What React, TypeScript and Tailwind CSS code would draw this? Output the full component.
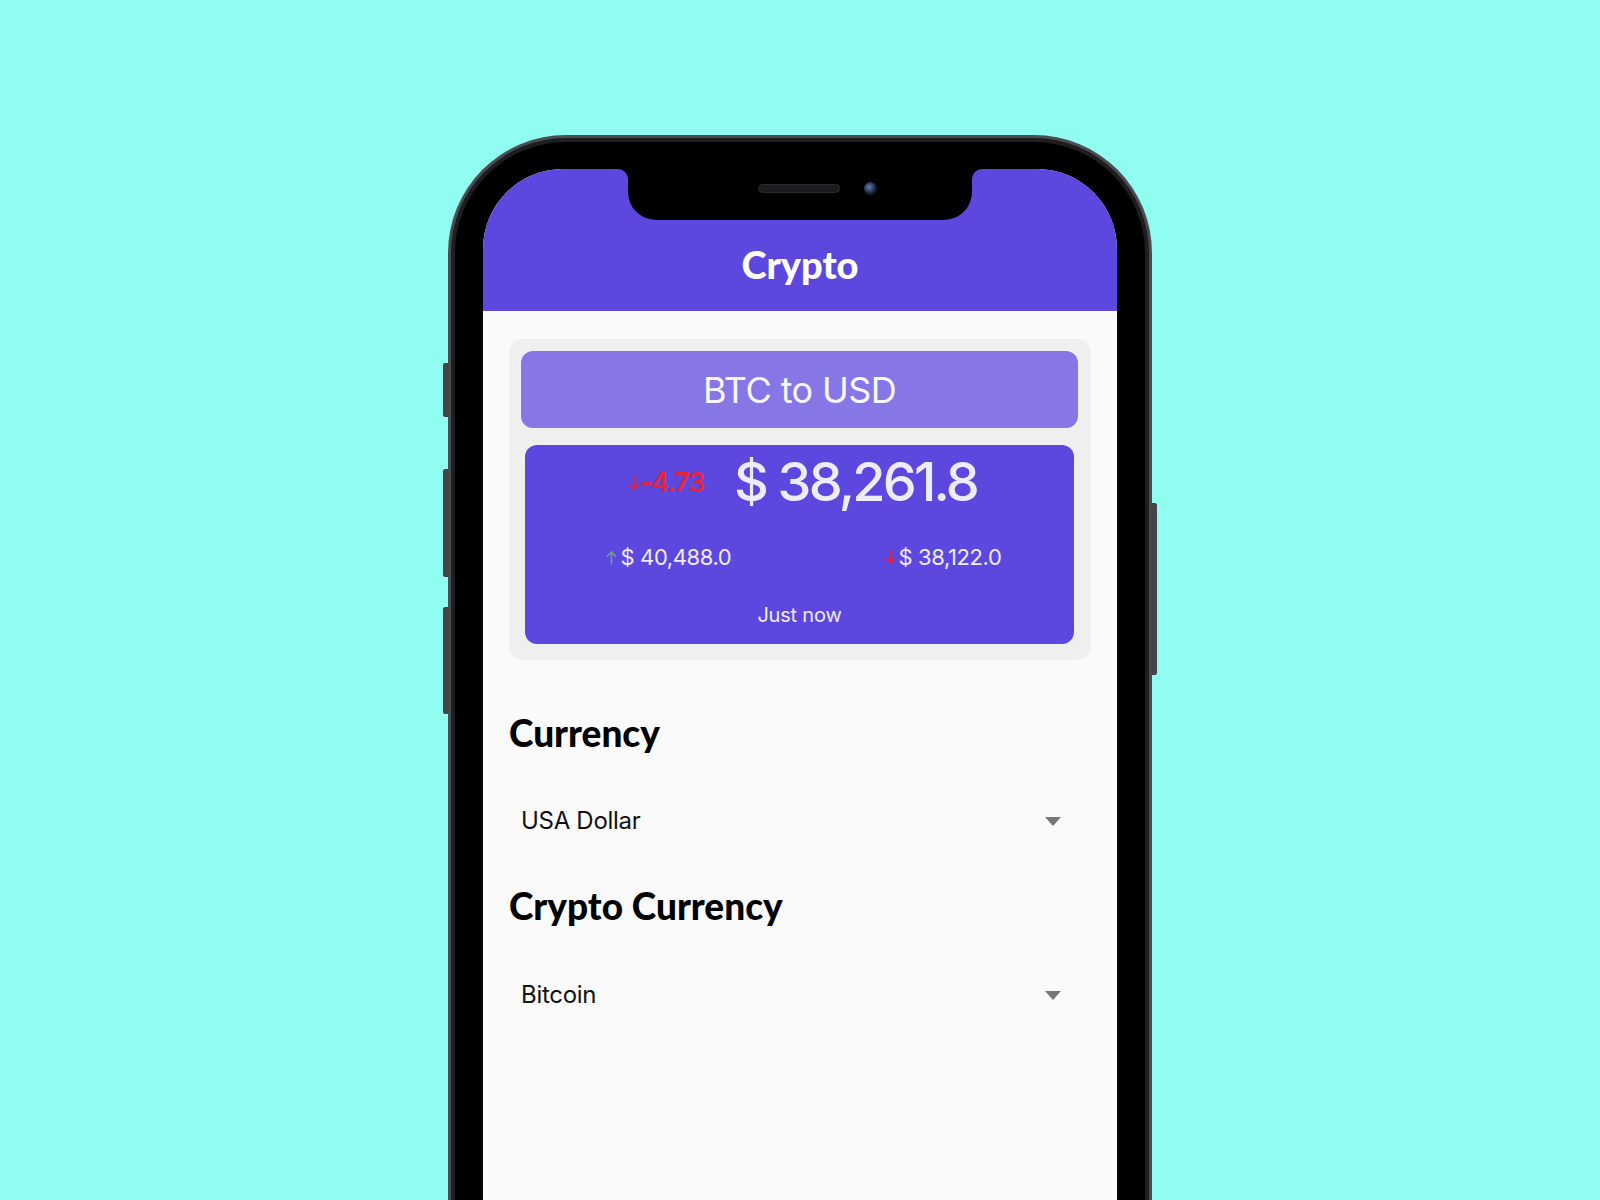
import React from "react";

const purple = "bg-[#5d48df]";

function ArrowUp({ className }: { className?: string }) {
  return (
    <svg viewBox="0 0 12 16" className={className} fill="none" stroke="currentColor" strokeWidth="1.6" strokeLinecap="round" strokeLinejoin="round">
      <path d="M6 15V2" />
      <path d="M1.5 6.5L6 2l4.5 4.5" />
    </svg>
  );
}

function ArrowDown({ className }: { className?: string }) {
  return (
    <svg viewBox="0 0 12 16" className={className} fill="none" stroke="currentColor" strokeWidth="1.8" strokeLinecap="round" strokeLinejoin="round">
      <path d="M6 1v13" />
      <path d="M1.5 9.5L6 14l4.5-4.5" />
    </svg>
  );
}

function Caret() {
  return (
    <svg viewBox="0 0 16 9" className="w-[16px] h-[9px] text-[#777]" fill="currentColor">
      <path d="M0 0h16L8 9z" />
    </svg>
  );
}

function SelectRow({ label }: { label: string }) {
  return (
    <div className="flex items-center justify-between h-[60px] pl-[12px] pr-[30px]">
      <span className="text-[24px] text-[#111] tracking-[-0.3px]">{label}</span>
      <Caret />
    </div>
  );
}

function Notch() {
  return (
    <div className="absolute top-0 left-1/2 -translate-x-1/2 w-[344px] h-[51px] bg-black rounded-b-[28px]">
      {/* little flares where the notch meets the bezel */}
      <div className="absolute -left-[10px] top-0 w-[10px] h-[10px] bg-black">
        <div className={`w-full h-full ${purple} rounded-tr-[10px]`} />
      </div>
      <div className="absolute -right-[10px] top-0 w-[10px] h-[10px] bg-black">
        <div className={`w-full h-full ${purple} rounded-tl-[10px]`} />
      </div>
      <div className="absolute left-[130px] top-[15px] w-[82px] h-[9px] rounded-full bg-[#1b1b1d] border border-[#2c2c2e]" />
      <div className="absolute left-[236px] top-[13px] w-[13px] h-[13px] rounded-full bg-[radial-gradient(circle_at_40%_40%,#5a7fb5,#142033_60%,#0b0b10)]" />
    </div>
  );
}

const lato = { fontFamily: "Lato, 'Noto Sans', sans-serif" };

export default function App() {
  return (
    <div
      className="w-full h-[1200px] overflow-hidden bg-[#90fdf0] flex justify-center pt-[135px]"
      style={{ fontFamily: "Inter, 'Noto Sans', sans-serif" }}
    >
      <div className="relative w-[704px] h-[1100px] shrink-0">
        {/* side buttons */}
        <div className="absolute -left-[5px] top-[228px] w-[6px] h-[54px] rounded-l-[2px] bg-[#444349]" />
        <div className="absolute -left-[5px] top-[334px] w-[6px] h-[108px] rounded-l-[2px] bg-[#444349]" />
        <div className="absolute -left-[5px] top-[472px] w-[6px] h-[107px] rounded-l-[2px] bg-[#444349]" />
        <div className="absolute -right-[5px] top-[368px] w-[6px] h-[172px] rounded-r-[2px] bg-[#444349]" />

        <div className="w-full h-full rounded-t-[118px] bg-[#4c4b51] p-[3px]">
          <div className="w-full h-full rounded-t-[115px] bg-[#1e1e21] p-[4px]">
            <div className="w-full h-full rounded-t-[111px] bg-black pt-[27px] px-[28px]">
              <div className="relative w-full h-full rounded-t-[80px] overflow-hidden bg-[#fafafa] flex flex-col">
                <Notch />

                {/* header */}
                <div className={`${purple} h-[142px] flex items-end justify-center pb-[27px]`}>
                  <h1 className="text-white text-[38px] leading-[40px] font-black" style={lato}>
                    Crypto
                  </h1>
                </div>

                <div className="px-[26px] pt-[28px]">
                  {/* rate card */}
                  <div className="bg-[#efefef] rounded-[14px] pt-[12px] pb-[16px] pl-[12px] pr-[13px]">
                    <div className="h-[77px] rounded-[12px] bg-[#8676e6] flex items-center justify-center">
                      <span className="text-[#f7f6ff] text-[36px] font-normal tracking-[-0.6px]">BTC to USD</span>
                    </div>
                    <div className={`mt-[17px] mx-[4px] h-[199px] rounded-[12px] ${purple} flex flex-col items-center text-[#eeecfb]`}>
                      <div className="h-[74px] flex items-center gap-[30px] pl-[6px]">
                        <div className="flex items-center text-[#e5243c] pt-[2px]">
                          <ArrowDown className="w-[12px] h-[15px]" />
                          <span className="text-[27px] font-semibold tracking-[-1.2px]">-4.73</span>
                        </div>
                        <span className="text-[54px] font-medium tracking-[-2.8px] leading-none">$ 38,261.8</span>
                      </div>
                      <div className="w-full mt-[21px] h-[34px] flex items-center justify-around">
                        <div className="flex items-center gap-[4px] pl-[8px]">
                          <ArrowUp className="w-[11px] h-[15px] text-[#6ea37a]" />
                          <span className="text-[22px] tracking-[-0.4px]">$ 40,488.0</span>
                        </div>
                        <div className="flex items-center gap-[3px] pl-[8px]">
                          <ArrowDown className="w-[11px] h-[15px] text-[#e5243c]" />
                          <span className="text-[22px] tracking-[-0.4px]">$ 38,122.0</span>
                        </div>
                      </div>
                      <div className="mt-[26px] text-[20px] tracking-[-0.2px]">Just now</div>
                    </div>
                  </div>

                  <h2 className="mt-[53px] text-[37px] leading-[40px] font-black text-black" style={lato}>
                    Currency
                  </h2>
                  <div className="mt-[38px]">
                    <SelectRow label="USA Dollar" />
                  </div>

                  <h2 className="mt-[35px] text-[37px] leading-[40px] font-black text-black" style={lato}>
                    Crypto Currency
                  </h2>
                  <div className="mt-[39px]">
                    <SelectRow label="Bitcoin" />
                  </div>
                </div>
              </div>
            </div>
          </div>
        </div>
      </div>
    </div>
  );
}
